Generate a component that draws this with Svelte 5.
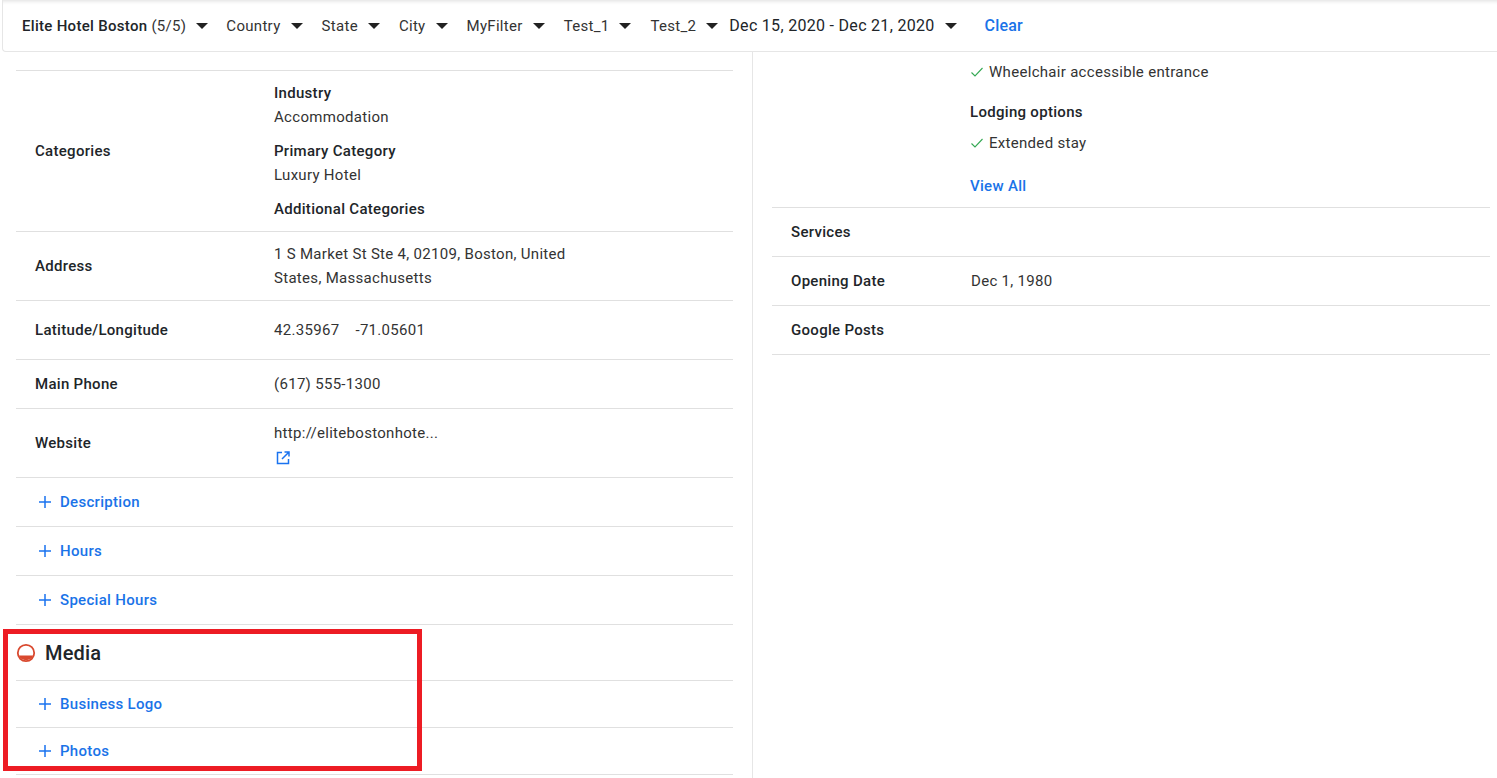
<script>
  const filters = ['Country', 'State', 'City', 'MyFilter', 'Test_1', 'Test_2'];
</script>

<div class="page">
  <header class="topbar">
    <div class="filter first"><span><b>Elite Hotel Boston</b> (5/5)</span><i class="caret"></i></div>
    {#each filters as f}
      <div class="filter"><span>{f}</span><i class="caret"></i></div>
    {/each}
    <div class="filter date"><span>Dec 15, 2020 - Dec 21, 2020</span><i class="caret"></i></div>
    <a class="clear">Clear</a>
  </header>

  <div class="content">
    <section class="left">
      <div class="row cat">
        <div class="label">Categories</div>
        <div class="value">
          <div class="h">Industry</div>
          <div class="t">Accommodation</div>
          <div class="h gap">Primary Category</div>
          <div class="t">Luxury Hotel</div>
          <div class="h gap">Additional Categories</div>
        </div>
      </div>
      <div class="row addr">
        <div class="label">Address</div>
        <div class="value narrow">1 S Market St Ste 4, 02109, Boston, United States, Massachusetts</div>
      </div>
      <div class="row latlng">
        <div class="label">Latitude/Longitude</div>
        <div class="value">42.35967 &nbsp;&nbsp; -71.05601</div>
      </div>
      <div class="row std">
        <div class="label">Main Phone</div>
        <div class="value">(617) 555-1300</div>
      </div>
      <div class="row web">
        <div class="label">Website</div>
        <div class="value">
          <div>http://elitebostonhote...</div>
          <svg class="ext" width="16" height="16" viewBox="0 0 16 16" fill="none" stroke="#1a73f0" stroke-width="1.5">
            <path d="M7 2.5H2.5v11h11V9" />
            <path d="M9.5 2H14v4.5M14 2L7 9" />
          </svg>
        </div>
      </div>
      {#each ['Description', 'Hours', 'Special Hours'] as x}
        <div class="row std expand">
          <svg class="plus" width="12" height="12" viewBox="0 0 12 12"><path d="M6 0v12M0 6h12" stroke="#1a73f0" stroke-width="1.5" /></svg>
          <a>{x}</a>
        </div>
      {/each}
      <div class="media-head">
        <svg width="20" height="20" viewBox="0 0 20 20">
          <circle cx="10" cy="10" r="8.2" fill="#fff" stroke="#d9492f" stroke-width="1.8" />
          <path d="M2.6 12.5h14.8A8.2 8.2 0 0 1 2.6 12.5z" fill="#d9492f" />
        </svg>
        <h2>Media</h2>
      </div>
      {#each ['Business Logo', 'Photos'] as x}
        <div class="row media expand">
          <svg class="plus" width="12" height="12" viewBox="0 0 12 12"><path d="M6 0v12M0 6h12" stroke="#1a73f0" stroke-width="1.5" /></svg>
          <a>{x}</a>
        </div>
      {/each}
    </section>

    <section class="right">
      <div class="attrs">
        <div class="check"><svg width="14" height="12" viewBox="0 0 14 12" fill="none"><path d="M1.5 6.5l3.5 3.5L12.5 2" stroke="#34a853" stroke-width="1.1" /></svg>Wheelchair accessible entrance</div>
        <div class="h opt">Lodging options</div>
        <div class="check stay"><svg width="14" height="12" viewBox="0 0 14 12" fill="none"><path d="M1.5 6.5l3.5 3.5L12.5 2" stroke="#34a853" stroke-width="1.1" /></svg>Extended stay</div>
        <a class="all">View All</a>
      </div>
      <div class="row std rrow"><div class="label">Services</div></div>
      <div class="row std rrow"><div class="label">Opening Date</div><div class="value">Dec 1, 1980</div></div>
      <div class="row std rrow"><div class="label">Google Posts</div></div>
    </section>
  </div>

  <div class="annotation"></div>
</div>

<style>
  :global(body) {
    margin: 0;
    background: #fff;
    font-family: Roboto, "Liberation Sans", sans-serif;
    color: #212529;
    overflow: hidden;
  }

  .page {
    position: relative;
    height: 778px;
    overflow: hidden;
    font-size: 15px;
    letter-spacing: 0.3px;
  }

  .topbar {
    display: flex;
    align-items: center;
    height: 51px;
    border-bottom: 1px solid #e6e6e6;
    border-left: 1px solid #e6e6e6;
    border-bottom-left-radius: 4px;
    margin-left: 2px;
    padding-left: 19px;
    box-shadow: inset 0 5px 4px -4px #ddd;
    box-sizing: content-box;
  }

  .filter {
    display: flex;
    align-items: center;
    margin-right: 19px;
    color: #333;
    white-space: nowrap;
  }

  .filter b {
    font-weight: 500;
    color: #212529;
  }

  .first {
    margin-right: 18px;
  }

  .caret {
    display: block;
    width: 0;
    height: 0;
    margin-left: 10px;
    border-left: 6px solid transparent;
    border-right: 6px solid transparent;
    border-top: 6px solid #222;
  }

  .date {
    font-size: 16px;
    margin-left: -8px;
    margin-right: 28px;
    color: #212529;
  }

  .clear {
    color: #1a73e8;
    font-size: 16px;
    font-weight: 500;
    letter-spacing: 0.2px;
  }

  .content {
    display: flex;
    height: 726px;
  }

  .left {
    width: 717px;
    margin-left: 16px;
    padding-top: 18px;
    padding-right: 19px;
    border-right: 1px solid #e6e6e6;
  }

  .right {
    width: 718px;
    margin-left: 19px;
  }

  .row {
    display: flex;
    align-items: center;
    border-bottom: 1px solid #e0e0e0;
    padding-left: 19px;
  }

  .left .row:first-child {
    border-top: 1px solid #e0e0e0;
  }

  .label {
    width: 239px;
    flex: none;
    font-weight: 500;
    color: #212529;
  }

  .value {
    color: #333;
    line-height: 24px;
  }

  .narrow {
    width: 320px;
  }

  .h {
    font-weight: 500;
    color: #212529;
    line-height: 24px;
  }

  .t {
    line-height: 24px;
  }

  .gap {
    margin-top: 10px;
  }

  .cat {
    height: 160px;
  }

  .addr {
    height: 68px;
  }

  .latlng {
    height: 58px;
  }

  .std {
    height: 48px;
  }

  .web {
    height: 68px;
  }

  .ext {
    display: block;
    margin-top: 5px;
    margin-left: 1px;
  }

  .expand {
    padding-left: 23px;
  }

  .expand a {
    color: #1a73e8;
    font-weight: 500;
    margin-left: 9px;
  }

  .plus {
    flex: none;
  }

  .media-head {
    display: flex;
    align-items: center;
    height: 55px;
    border-bottom: 1px solid #e0e0e0;
  }

  .media-head svg {
    display: block;
  }

  .media-head h2 {
    margin: 0 0 0 9px;
    font-size: 20px;
    font-weight: 500;
    letter-spacing: 0.2px;
    color: #212529;
  }

  .media {
    height: 46px;
  }

  .rrow .label {
    width: 180px;
  }

  .attrs {
    height: 156px;
    border-bottom: 1px solid #e0e0e0;
    padding-left: 198px;
    box-sizing: border-box;
    padding-top: 8px;
  }

  .check {
    display: flex;
    align-items: center;
    line-height: 24px;
    color: #333;
  }

  .check svg {
    margin-right: 5px;
  }

  .opt {
    margin-top: 16px;
  }

  .stay {
    margin-top: 7px;
  }

  .all {
    display: block;
    margin-top: 19px;
    line-height: 24px;
    color: #1a73e8;
    font-weight: 500;
  }

  .annotation {
    position: absolute;
    left: 3px;
    top: 629px;
    width: 409px;
    height: 132px;
    border: 5px solid #ed1c24;
  }
</style>
